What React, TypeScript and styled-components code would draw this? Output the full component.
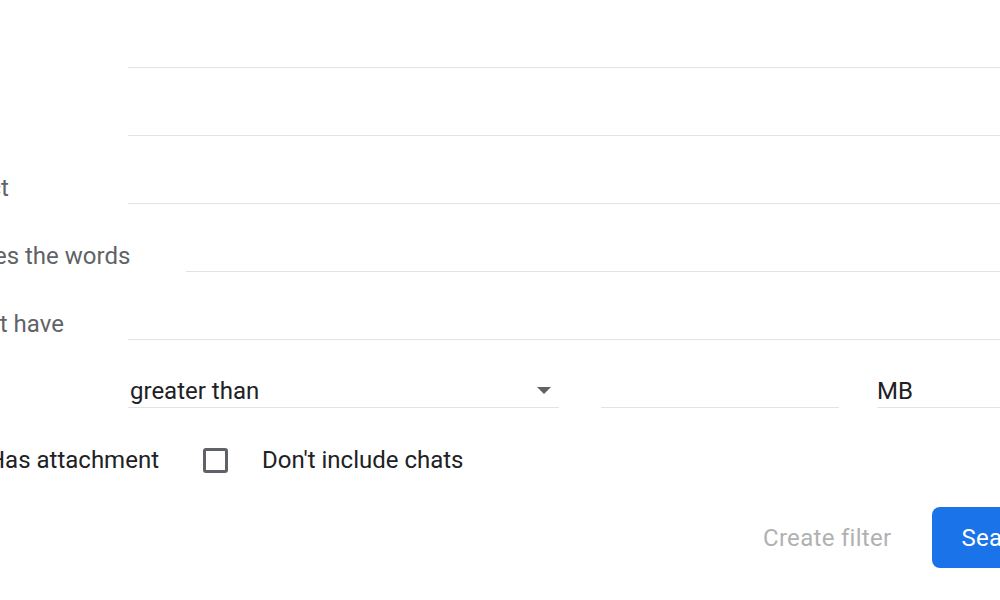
import React from "react";
import styled, { createGlobalStyle } from "styled-components";

const Global = createGlobalStyle`
  html, body { margin: 0; padding: 0; background: #ffffff; overflow: hidden; }
  body { font-family: Roboto, "Liberation Sans", Arial, sans-serif; }
`;

const Panel = styled.div`
  margin-left: -71px;
  width: 1137px;
  display: flex;
  flex-direction: column;
  font-size: 24px;
`;

const Row = styled.div`
  display: flex;
  align-items: flex-end;
  height: 68px;
`;

const Label = styled.div`
  min-width: 143px;
  margin-right: 56px;
  line-height: 32px;
  color: #5f6368;
  white-space: nowrap;
`;

const Field = styled.div<{ $width?: number; $grow?: boolean; $inset?: number }>`
  ${(p) => (p.$grow ? "flex: 1;" : "")}
  ${(p) => (p.$width ? `width: ${p.$width}px; flex: none;` : "")}
  height: 40px;
  border-bottom: 1px solid #e3e3e3;
  box-sizing: border-box;
  display: flex;
  align-items: flex-end;
  justify-content: space-between;
  line-height: 32px;
  color: #202124;
  padding-left: ${(p) => p.$inset ?? 0}px;
`;

const Gap = styled.div<{ $w: number }>`
  width: ${(p) => p.$w}px;
  flex: none;
`;

const Caret = styled.span`
  width: 0;
  height: 0;
  border-left: 7px solid transparent;
  border-right: 7px solid transparent;
  border-top: 7px solid #5f6368;
  margin: 0 8px 13px 0;
`;

const CheckRow = styled.div`
  display: flex;
  align-items: center;
  height: 104px;
  color: #202124;
`;

const Box = styled.span`
  width: 25px;
  height: 25px;
  box-sizing: border-box;
  border: 3px solid #5f6368;
  border-radius: 3px;
  flex: none;
`;

const CheckLabel = styled.span`
  margin-left: 34px;
  margin-right: 44px;
  line-height: 32px;
  white-space: nowrap;
`;

const Actions = styled.div`
  display: flex;
  justify-content: flex-end;
  align-items: center;
  gap: 41px;
  margin-top: -5px;
`;

const TextButton = styled.span`
  color: #b1b1b1;
  letter-spacing: 0.3px;
`;

const PrimaryButton = styled.span`
  background: #1a73e8;
  color: #ffffff;
  height: 61px;
  padding: 0 29px;
  border-radius: 8px;
  display: flex;
  align-items: center;
  letter-spacing: 0.3px;
`;

const rows = ["From", "To", "Subject", "Includes the words", "Doesn't have"];

export default function App() {
  return (
    <>
      <Global />
      <Panel>
        {rows.map((r) => (
          <Row key={r}>
            <Label>{r}</Label>
            <Field $grow />
          </Row>
        ))}
        <Row>
          <Label>Size</Label>
          <Field $width={431} $inset={2}>
            <span>greater than</span>
            <Caret />
          </Field>
          <Gap $w={42} />
          <Field $width={238} />
          <Gap $w={38} />
          <Field $grow>
            <span>MB</span>
          </Field>
        </Row>
        <CheckRow>
          <Box />
          <CheckLabel>Has attachment</CheckLabel>
          <Box />
          <CheckLabel>Don't include chats</CheckLabel>
        </CheckRow>
        <Actions>
          <TextButton>Create filter</TextButton>
          <PrimaryButton>Search</PrimaryButton>
        </Actions>
      </Panel>
    </>
  );
}
